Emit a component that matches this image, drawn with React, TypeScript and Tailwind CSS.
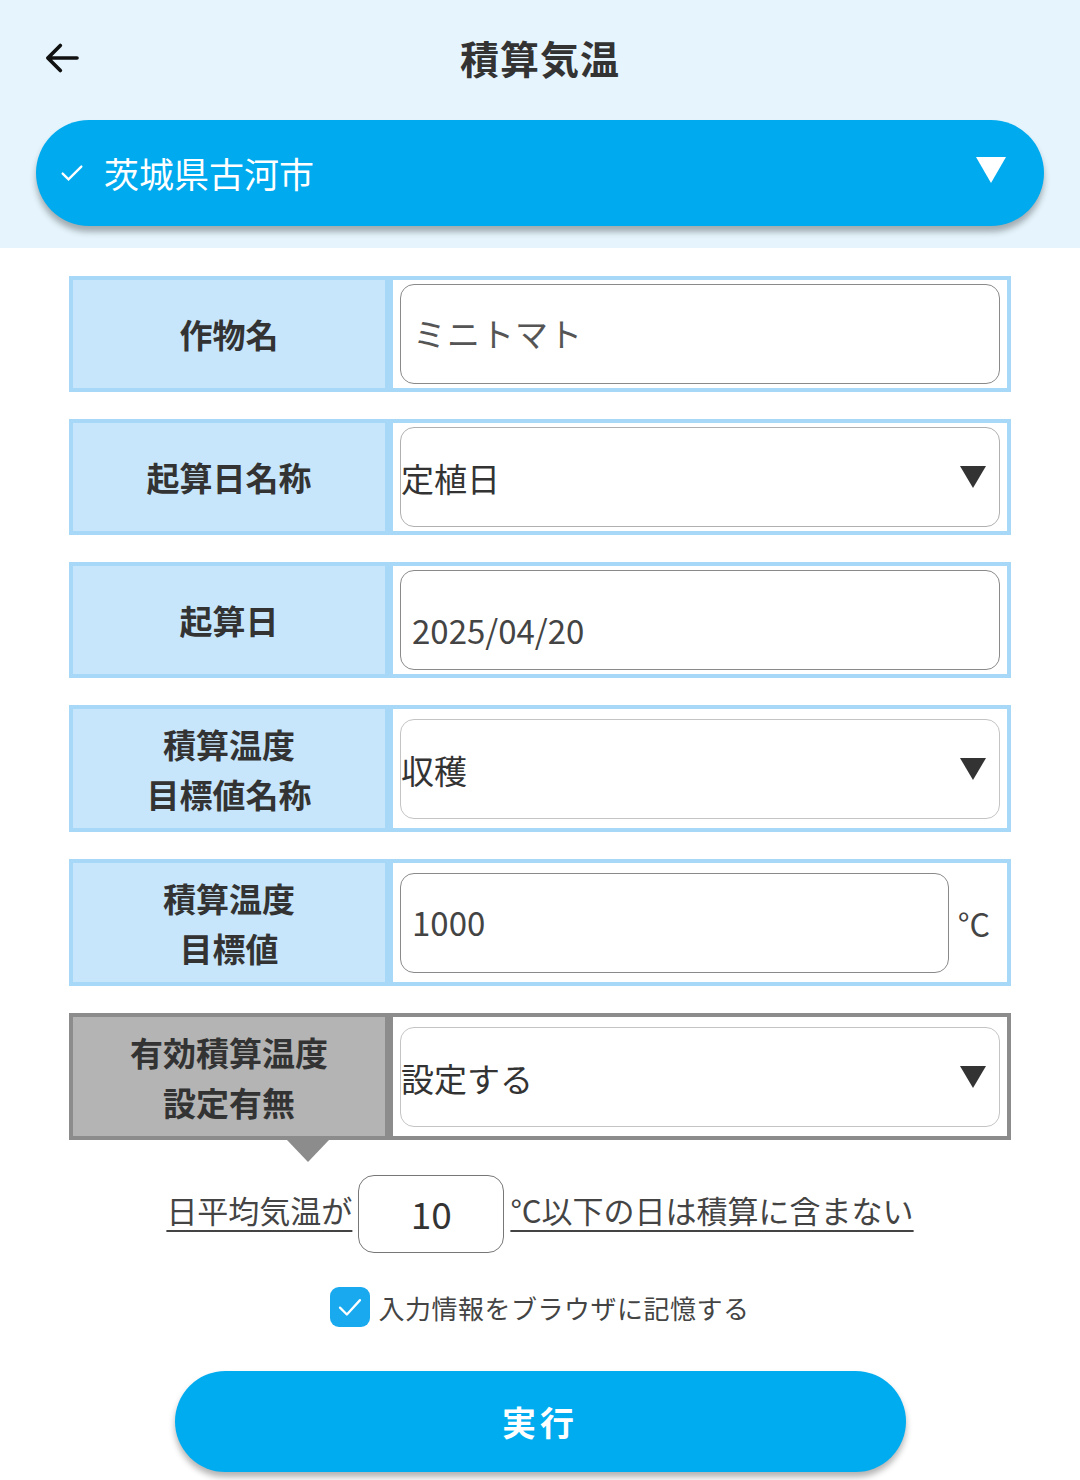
import type { ReactNode } from 'react'

const font = { fontFamily: '"Noto Sans CJK JP", "Noto Sans", sans-serif' }

function Caret({ className = 'fill-[#333]', w = 26, h = 22 }: { className?: string; w?: number; h?: number }) {
  return (
    <svg width={w} height={h} viewBox={`0 0 ${w} ${h}`} className={className}>
      <path d={`M0 0H${w}L${w / 2} ${h}Z`} />
    </svg>
  )
}

function Row({
  label,
  children,
  tall = false,
  gray = false,
}: {
  label: ReactNode
  children: ReactNode
  tall?: boolean
  gray?: boolean
}) {
  const border = gray ? 'border-[#8c8c8c]' : 'border-[#a8d8f8]'
  return (
    <div className={`flex ${tall ? 'h-[127px]' : 'h-[116px]'}`}>
      <div
        className={`w-[320px] shrink-0 border-4 ${border} ${gray ? 'bg-[#b4b4b4]' : 'bg-[#c7e6fb]'} flex items-center justify-center text-center text-[33px] font-bold leading-[50px] text-[#333]`}
      >
        {label}
      </div>
      <div className={`flex-1 border-4 ${border} bg-white px-[7px] flex items-center`}>{children}</div>
    </div>
  )
}

function Box({ children, className = '' }: { children: ReactNode; className?: string }) {
  return (
    <div
      className={`h-[100px] flex-1 rounded-[14px] border border-[#8a8a8a] flex items-center text-[33px] text-[#444] ${className}`}
    >
      {children}
    </div>
  )
}

function SelectBox({ value, light = false }: { value: string; light?: boolean }) {
  return (
    <div
      className={`h-[100px] flex-1 rounded-[14px] border ${light ? 'border-[#c4c4c4]' : 'border-[#b0b0b0]'} flex items-center justify-between pr-[13px] text-[33px] text-[#333]`}
    >
      <span className="pt-[4px]">{value}</span>
      <Caret />
    </div>
  )
}

export default function App() {
  return (
    <div className="w-[1080px] h-[1480px] bg-white overflow-hidden" style={font}>
      <div className="bg-[#e6f5fd] h-[248px] px-[36px] pt-[30px]">
        <div className="relative flex h-[60px] items-center justify-center">
          <svg
            width="40"
            height="40"
            viewBox="0 0 24 24"
            className="absolute left-[6px] top-[8px]"
            fill="none"
            stroke="#111"
            strokeWidth="2.2"
            strokeLinecap="round"
            strokeLinejoin="round"
          >
            <path d="M21 12H4M11 4.5 3.5 12 11 19.5" />
          </svg>
          <h1 className="-mt-[5px] text-[39px] font-bold tracking-[1px] text-[#333]">積算気温</h1>
        </div>
        <div className="mt-[30px] flex h-[106px] items-center rounded-full bg-[#00aaef] pl-[22px] pr-[38px] shadow-[0_6px_6px_rgba(0,0,0,0.3)]">
          <svg width="28" height="28" viewBox="0 0 24 24" fill="none" stroke="white" strokeWidth="2" strokeLinecap="round">
            <path d="M4 12.5 9 17.5 20 6.5" />
          </svg>
          <span className="ml-[18px] text-[35px] text-white">茨城県古河市</span>
          <span className="ml-auto -mt-[6px]">
            <Caret className="fill-white" w={30} h={26} />
          </span>
        </div>
      </div>

      <div className="mx-[69px] mt-[28px] flex flex-col gap-[27px]">
        <Row label="作物名">
          <Box className="pl-[12px] tracking-[1px] text-[#555]">ミニトマト</Box>
        </Row>
        <Row label="起算日名称">
          <SelectBox value="定植日" />
        </Row>
        <Row label="起算日">
          <Box className="pl-[11px] pt-[22px]">2025/04/20</Box>
        </Row>
        <Row tall label={<span>積算温度<br />目標値名称</span>}>
          <SelectBox value="収穫" light />
        </Row>
        <Row tall label={<span>積算温度<br />目標値</span>}>
          <Box className="pl-[11px]">1000</Box>
          <span className="ml-[9px] mr-[10px] text-[32px] text-[#444]">°C</span>
        </Row>
        <div className="relative">
          <Row tall gray label={<span>有効積算温度<br />設定有無</span>}>
            <SelectBox value="設定する" light />
          </Row>
          <svg width="42" height="22" viewBox="0 0 42 22" className="absolute left-[218px] top-[127px] fill-[#8c8c8c]">
            <path d="M0 0H42L21 22Z" />
          </svg>
        </div>
      </div>

      <div className="mt-[35px] flex items-center justify-center text-[31px] text-[#444]">
        <span className="-mt-[8px] underline underline-offset-[7px] decoration-[2px]">日平均気温が</span>
        <div className="mx-[6px] flex h-[78px] w-[146px] items-center justify-center rounded-[16px] border border-[#777] text-[37px] text-[#333]">
          10
        </div>
        <span className="-mt-[8px] underline underline-offset-[7px] decoration-[2px]">°C以下の日は積算に含まない</span>
      </div>

      <div className="mt-[34px] flex items-center justify-center">
        <div className="flex h-[40px] w-[40px] items-center justify-center rounded-[9px] bg-[#18a9ef]">
          <svg width="30" height="30" viewBox="0 0 24 24" fill="none" stroke="white" strokeWidth="1.8" strokeLinecap="round" strokeLinejoin="round">
            <path d="M4 12.5 9.5 18 20 6.5" />
          </svg>
        </div>
        <span className="ml-[8px] text-[26px] tracking-[0.5px] text-[#444]">入力情報をブラウザに記憶する</span>
      </div>

      <div className="mt-[44px] flex justify-center">
        <button className="flex h-[101px] w-[731px] items-center justify-center rounded-full bg-[#00acf0] text-[34px] font-bold tracking-[4px] text-white shadow-[0_5px_6px_rgba(0,0,0,0.3)]">
          実行
        </button>
      </div>
    </div>
  )
}
